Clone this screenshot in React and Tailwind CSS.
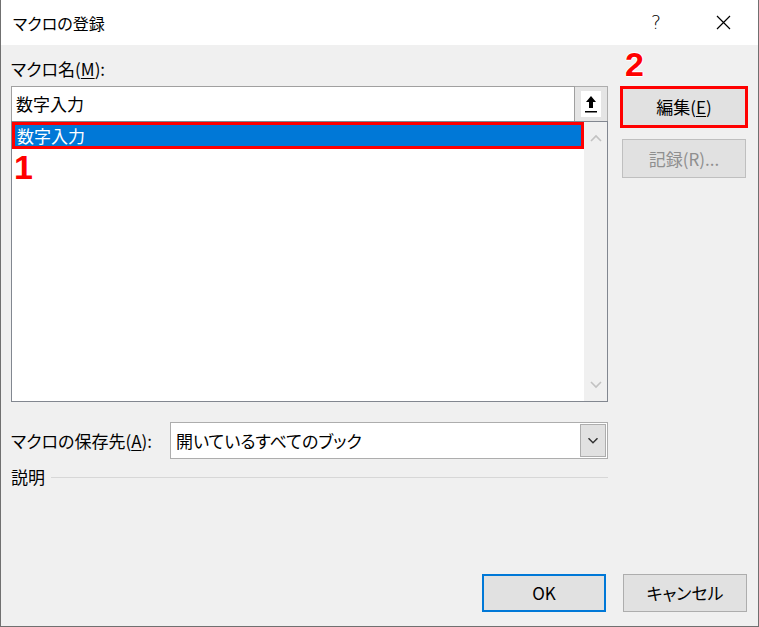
const jp = "font-['Noto_Sans_CJK_JP','Noto_Sans',sans-serif] [font-feature-settings:'palt']"

function Chevron({ up, className }) {
  return (
    <svg width="12" height="8" viewBox="0 0 12 8" className={className}>
      <path
        d={up ? 'M1 7 L6 2 L11 7' : 'M1 1 L6 6 L11 1'}
        fill="none"
        stroke="currentColor"
        strokeWidth="1.6"
      />
    </svg>
  )
}

function Button({ children, className = '' }) {
  return (
    <div
      className={`flex h-[38px] w-[124px] items-center justify-center bg-[#e1e1e1] ${className}`}
    >
      {children}
    </div>
  )
}

export default function App() {
  return (
    <div
      className={`flex h-[627px] w-[759px] flex-col border-x border-b border-[#707070] bg-[#f0f0f0] text-[17px] text-black ${jp}`}
    >
      <header className="flex h-[45px] shrink-0 items-center bg-white pl-[12px]">
        <span className="text-[16px] leading-none">マクロの登録</span>
        <span className="ml-auto mr-[55px] font-['DejaVu_Sans',sans-serif] text-[19px] font-extralight leading-none">?</span>
        <svg width="15" height="15" viewBox="0 0 15 15" className="mr-[27px]">
          <path d="M1 1 L14 14 M14 1 L1 14" stroke="#000" strokeWidth="1.2" />
        </svg>
      </header>

      <div className="relative flex flex-1 flex-col px-[10px] pt-[13px]">
        <div className="flex gap-[14px]">
          <div className="flex w-[597px] flex-col">
            <label className="h-[22px] leading-[22px]">
              マクロ名(<span className="underline underline-offset-2">M</span>):
            </label>
            <div className="mt-[6px] flex h-[35px]">
              <div className="flex flex-1 items-center border border-b-0 border-[#a0a0a0] bg-white pl-[4px]">
                数字入力
              </div>
              <div className="flex w-[33px] items-center justify-center border border-b-0 border-l-0 border-[#adadad] bg-[#e5e5e5]">
                <div className="flex h-[26px] w-[20px] items-center justify-center bg-white">
                  <svg width="12" height="18" viewBox="0 0 12 18">
                    <path d="M6 1 L11 7 L8 7 L8 13 L4 13 L4 7 L1 7 Z" fill="#000" />
                    <rect x="0" y="16" width="12" height="1.5" fill="#000" />
                  </svg>
                </div>
              </div>
            </div>
            <div className="relative flex h-[281px] border border-[#828790] bg-white">
              <div className="flex-1">
                <div className="flex h-[27px] items-center border-[3px] border-[#ff0000] bg-[#0078d7] pl-[2px] text-white">
                  数字入力
                </div>
              </div>
              <div className="flex w-[23px] flex-col items-center justify-between bg-[#f0f0f0] py-[12px] text-[#c2c2c2]">
                <Chevron up />
                <Chevron />
              </div>
              <span className="absolute left-[2px] top-[28px] font-['Liberation_Sans',sans-serif] text-[34px] font-bold leading-none text-[#ff0000]">
                1
              </span>
            </div>
            <div className="mt-[20px] flex items-center">
              <label className="w-[159px] leading-[22px]">
                マクロの保存先(<span className="underline underline-offset-2">A</span>):
              </label>
              <div className="flex h-[37px] flex-1 items-center border border-[#adadad] bg-white p-px pl-[5px]">
                <span className="flex-1">開いているすべてのブック</span>
                <div className="flex h-full w-[26px] items-center justify-center border border-[#adadad] bg-[#e1e1e1] text-[#333]">
                  <Chevron className="scale-90" />
                </div>
              </div>
            </div>
            <div className="mt-[7px] flex h-[22px] items-center">
              <span className="leading-[22px]">説明</span>
              <div className="ml-[6px] h-px flex-1 bg-[#d7d7d7]" />
            </div>
          </div>

          <div className="relative flex w-[124px] flex-col pt-[28px]">
            <span className="absolute left-[3px] top-[-11px] font-['Liberation_Sans',sans-serif] text-[34px] font-bold leading-none text-[#ff0000] [text-shadow:1px_0_0_#fff,-1px_0_0_#fff,0_1px_0_#fff,0_-1px_0_#fff]">
              2
            </span>
            <div className="-mx-[2px] flex h-[42px] items-center justify-center border-[3px] border-[#ff0000] bg-[#e1e1e1]">
              編集(<span className="underline underline-offset-2">E</span>)
            </div>
            <Button className="mt-[11px] h-[39px] border border-[#bfbfbf] text-[#8f8f8f]">
              記録(R)...
            </Button>
          </div>
        </div>

        <div className="mt-auto flex justify-end gap-[17px] pb-[14px] pr-[1px]">
          <Button className="border-2 border-[#0078d7]">OK</Button>
          <Button className="border border-[#adadad]">キャンセル</Button>
        </div>
      </div>
    </div>
  )
}
